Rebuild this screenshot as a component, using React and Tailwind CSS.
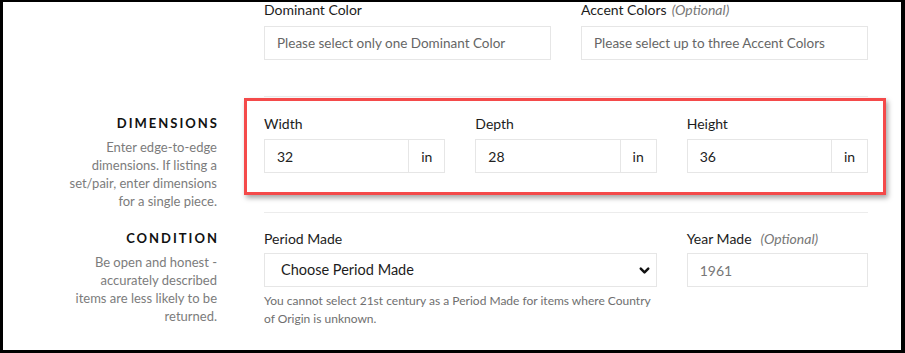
import React from "react";
import { ChevronDown } from "lucide-react";

const font = { fontFamily: "Lato, 'Liberation Sans', sans-serif" };

function Field({ label, optional, children, gap = "mb-[7px]", optGap = "ml-[4px]" }) {
  return (
    <div className="flex flex-col">
      <label className={`text-[14px] leading-[16px] text-[#1c1c1c] ${gap}`}>
        {label}
        {optional && <i className={`text-[#777] ${optGap}`}>(Optional)</i>}
      </label>
      {children}
    </div>
  );
}

function UnitInput({ value }) {
  return (
    <div className="flex h-[34px] border border-[#e6e6e6]">
      <div className="flex-1 flex items-center pl-[12px] text-[14px] text-[#222]">{value}</div>
      <div className="w-[36px] border-l border-[#e6e6e6] flex items-center justify-center text-[14px] text-[#222]">
        in
      </div>
    </div>
  );
}

function SideNote({ title, lines }) {
  return (
    <div className="text-right pr-[1px]">
      <h3 className="text-[13px] leading-[16px] font-bold tracking-[2px] mr-[-2px] text-[#111]">{title}</h3>
      <p className="mt-[7px] text-[13px] leading-[18px] text-[#7c7c7c]">
        {lines.map((l, i) => (
          <React.Fragment key={i}>
            {l}
            {i < lines.length - 1 && <br />}
          </React.Fragment>
        ))}
      </p>
    </div>
  );
}

export default function App() {
  return (
    <div className="w-[905px] h-[353px] bg-black pt-[2px] pl-[3px] pr-[4px] pb-[3px]" style={font}>
      <div className="relative w-full h-full bg-white overflow-hidden">
        {/* colors */}
        <div className="grid grid-cols-[215px_604px] gap-x-[46px]">
          <div />
          <div className="grid grid-cols-2 gap-x-[30px] pb-[36px] border-b border-[#ececec]">
            <Field label="Dominant Color" gap="mb-[8px]">
              <div className="h-[34px] border border-[#e6e6e6] flex items-center pl-[12px] text-[13.5px] text-[#666]">
                Please select only one Dominant Color
              </div>
            </Field>
            <Field label="Accent Colors" optional gap="mb-[8px]" optGap="ml-[5px]">
              <div className="h-[34px] border border-[#e6e6e6] flex items-center pl-[12px] text-[13.5px] text-[#666]">
                Please select up to three Accent Colors
              </div>
            </Field>
          </div>
        </div>

        {/* dimensions */}
        <div className="grid grid-cols-[215px_604px] gap-x-[46px]">
          <div className="pt-[18px]">
            <SideNote
              title="DIMENSIONS"
              lines={["Enter edge-to-edge", "dimensions. If listing a", "set/pair, enter dimensions", "for a single piece."]}
            />
          </div>
          <div className="grid grid-cols-3 gap-x-[30px] pt-[19px] pb-[39px] border-b border-[#ececec]">
            <Field label="Width">
              <UnitInput value="32" />
            </Field>
            <Field label="Depth">
              <UnitInput value="28" />
            </Field>
            <Field label="Height">
              <UnitInput value="36" />
            </Field>
          </div>
        </div>

        {/* condition */}
        <div className="grid grid-cols-[215px_604px] gap-x-[46px]">
          <div className="pt-[17px]">
            <SideNote
              title="CONDITION"
              lines={["Be open and honest -", "accurately described", "items are less likely to be", "returned."]}
            />
          </div>
          <div className="grid grid-cols-3 gap-x-[30px] pt-[18px]">
            <div className="col-span-2">
              <Field label="Period Made" gap="mb-[6px]">
                <div className="h-[34px] border border-[#e6e6e6] flex items-center justify-between pl-[16px] pr-[1px] text-[14.5px] text-[#1c1c1c]">
                  <span>Choose Period Made</span>
                  <ChevronDown size={15} strokeWidth={4} className="text-[#111] mr-[3px]" />
                </div>
              </Field>
              <p className="mt-[5px] text-[12px] leading-[18px] text-[#6f6f6f] pr-[4px]">
                You cannot select 21st century as a Period Made for items where Country of Origin is unknown.
              </p>
            </div>
            <Field label="Year Made" optional gap="mb-[6px]" optGap="ml-[9px]">
              <div className="h-[34px] border border-[#e6e6e6] flex items-center pl-[12px] text-[14px] text-[#777]">
                1961
              </div>
            </Field>
          </div>
        </div>

        {/* highlight annotation */}
        <div className="absolute left-[241px] top-[96px] w-[642px] h-[97px] border-[3px] border-[#f44a4a] shadow-[2px_3px_5px_rgba(0,0,0,0.35)] pointer-events-none" />
      </div>
    </div>
  );
}
